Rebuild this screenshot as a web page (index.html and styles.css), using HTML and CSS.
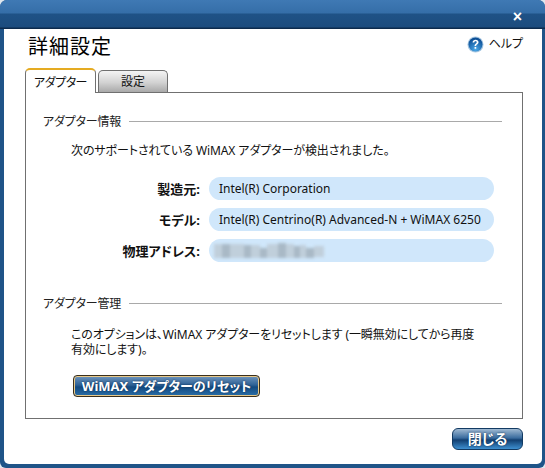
FILE: index.html
```html
<!DOCTYPE html>
<html lang="ja">
<head>
<meta charset="utf-8">
<title>詳細設定</title>
<link rel="stylesheet" href="styles.css">
</head>
<body>
<div class="window">
  <div class="titlebar"><span class="close-x">×</span></div>
  <div class="client">
    <header class="head">
      <h1 class="title">詳細設定</h1>
      <a class="help">
        <svg class="help-icon" viewBox="0 0 18 18" width="18" height="18" aria-hidden="true">
          <defs>
            <radialGradient id="hg" cx="50%" cy="85%" r="75%">
              <stop offset="0" stop-color="#4aa8e8"/>
              <stop offset="1" stop-color="#0d4f96"/>
            </radialGradient>
          </defs>
          <circle cx="9" cy="9" r="8.5" fill="#a9c8e2"/>
          <circle cx="9" cy="9" r="7.4" fill="url(#hg)"/>
          <path d="M5.9 6.9C6 4.9 7.4 4 9.1 4c1.8 0 3.1 1 3.1 2.6 0 1.2-.7 1.8-1.5 2.4-.7.5-1 .8-1 1.6H8c0-1.3.4-1.9 1.2-2.5.7-.5 1.1-.8 1.1-1.4 0-.7-.5-1.1-1.2-1.1-.8 0-1.3.5-1.4 1.3z" fill="#fff"/>
          <rect x="8" y="11.6" width="1.8" height="1.9" fill="#fff"/>
        </svg>
        <span>ヘルプ</span>
      </a>
    </header>
    <nav class="tabs">
      <div class="tab tab-active">アダプター</div>
      <div class="tab tab-idle">設定</div>
    </nav>
    <section class="panel">
      <div class="group-head"><span>アダプター情報</span><i class="rule"></i></div>
      <p class="intro">次のサポートされている WiMAX アダプターが検出されました。</p>
      <div class="rows">
        <div class="row"><b class="key">製造元:</b><div class="pill">Intel(R) Corporation</div></div>
        <div class="row"><b class="key">モデル:</b><div class="pill">Intel(R) Centrino(R) Advanced-N + WiMAX 6250</div></div>
        <div class="row"><b class="key">物理アドレス:</b><div class="pill"><svg class="blurred" width="114" height="22" viewBox="0 0 114 22" aria-hidden="true"><path fill="#a9b9c6" d="M8 4h8v14H8zM30 5h7v13h-7zM46 8h7v10h-7zM64 3h8v15h-8zM80 6h6v12h-6zM92 8h8v10h-8z"/><path fill="#c0cfdb" d="M0 4h8v14H0zM16 4h14v14H16zM37 5h9v13h-9zM53 4h11v14H53zM72 4h8v14h-8zM86 5h6v13h-6zM100 6h10v11h-10z"/></svg></div></div>
      </div>
      <div class="group-head group-two"><span>アダプター管理</span><i class="rule"></i></div>
      <p class="desc">このオプションは、WiMAX アダプターをリセットします (一瞬無効にしてから再度<br>有効にします)。</p>
      <button class="btn btn-reset">WiMAX アダプターのリセット</button>
    </section>
    <footer class="foot"><button class="btn btn-close">閉じる</button></footer>
  </div>
</div>
</body>
</html>
```
FILE: styles.css
```css
* { box-sizing: border-box; }
html, body { margin: 0; padding: 0; background: #dfe7ee; }
body { width: 545px; height: 468px; overflow: hidden; font-family: "Noto Sans", "Noto Sans CJK JP", sans-serif; font-size: 12px; color: #111; font-feature-settings: "palt"; }
.window { width: 545px; height: 468px; display: flex; flex-direction: column; border-radius: 7px 7px 6px 6px; overflow: hidden; background: #1f5488; }
.titlebar { height: 29px; flex: none; padding-right: 23px; display: flex; justify-content: flex-end; align-items: flex-start; background: linear-gradient(#3f79b4 0, #356ea8 13px, #1f5286 14px, #1c4c7e 27px, #0c2a4c 28px); }
.close-x { color: #fff; font: bold 16px/1 "Liberation Sans", sans-serif; margin-top: 9px; }
.client { flex: 1; margin: 0 3px 4px 4px; background: #fff; border-radius: 0 0 5px 5px; padding: 0 19px 0 21px; display: flex; flex-direction: column; }
.head { height: 39px; flex: none; display: flex; justify-content: space-between; align-items: flex-start; }
.title { margin: 6px 0 0 3px; font-size: 20px; line-height: 24px; font-weight: 400; letter-spacing: 1px; color: #000; font-feature-settings: normal; }
.help { display: flex; align-items: center; gap: 5px; margin: 6px 0 0 0; font-size: 12px; line-height: 18px; }
.help-icon { width: 17px; height: 17px; }
.tabs { display: flex; align-items: flex-end; height: 24px; flex: none; gap: 2px; margin-bottom: 0; position: relative; }
.tab { text-align: center; font-size: 12px; border-radius: 5px 5px 0 0; }
.tab-active { width: 71px; height: 25px; margin-bottom: -1px; line-height: 26px; letter-spacing: -0.5px; background: #fff; border: 1px solid #707070; border-top: 2px solid #e5ab22; border-bottom: 0; position: relative; z-index: 1; }
.tab-idle { width: 70px; height: 22px; line-height: 22px; background: linear-gradient(#f4f4f4, #d2d2d2 55%, #a9a9a9); border: 1px solid #707070; border-bottom: 0; }
.panel { width: 498px; height: 327px; flex: none; border: 1px solid #707070; padding: 20px 20px 0 17px; }
.group-head { display: flex; align-items: center; gap: 8px; height: 16px; color: #222; letter-spacing: -0.2px; }
.rule { flex: 1; height: 1px; background: #a9a9a9; }
.group-two { margin-top: 33px; }
.intro { margin: 14px 0 0 28px; line-height: 16px; letter-spacing: -0.1px; }
.rows { margin-top: 18px; display: flex; flex-direction: column; gap: 8px; }
.row { display: flex; align-items: center; gap: 9px; margin-left: -17px; }
.key { width: 174px; text-align: right; font-weight: 700; font-size: 13px; }
.pill { width: 285px; height: 23px; border-radius: 12px; background: #d0e7fb; padding-left: 10px; line-height: 23px; display: flex; align-items: center; }
.blurred { filter: blur(1.4px); margin-left: -5px; }
.desc { margin: 16px 0 0 28px; line-height: 15px; width: 430px; letter-spacing: -0.1px; }
.btn { display: block; font-family: inherit; color: #fff; font-weight: 700; padding: 0; cursor: default; text-shadow: 0 0 2px #0b2a4c; font-feature-settings: "palt"; }
.btn-reset { margin: 18px 0 0 30px; width: 187px; height: 22px; font-size: 13px; line-height: 18px; border-radius: 4px; border: 1px solid #3a2f1c; box-shadow: inset 0 0 0 1px #e8c98a; background: linear-gradient(#6f95bd, #2f6296 45%, #144a80 55%, #2a6fa8); }
.foot { flex: 1; display: flex; justify-content: flex-end; align-items: flex-start; padding: 9px 0 0; }
.btn-close { width: 71px; height: 22px; font-size: 14px; line-height: 18px; border-radius: 6px; border: 1px solid #123a62; background: linear-gradient(#9fb9d2, #3a6c9e 45%, #123f70 55%, #3d8fd0); }
```
